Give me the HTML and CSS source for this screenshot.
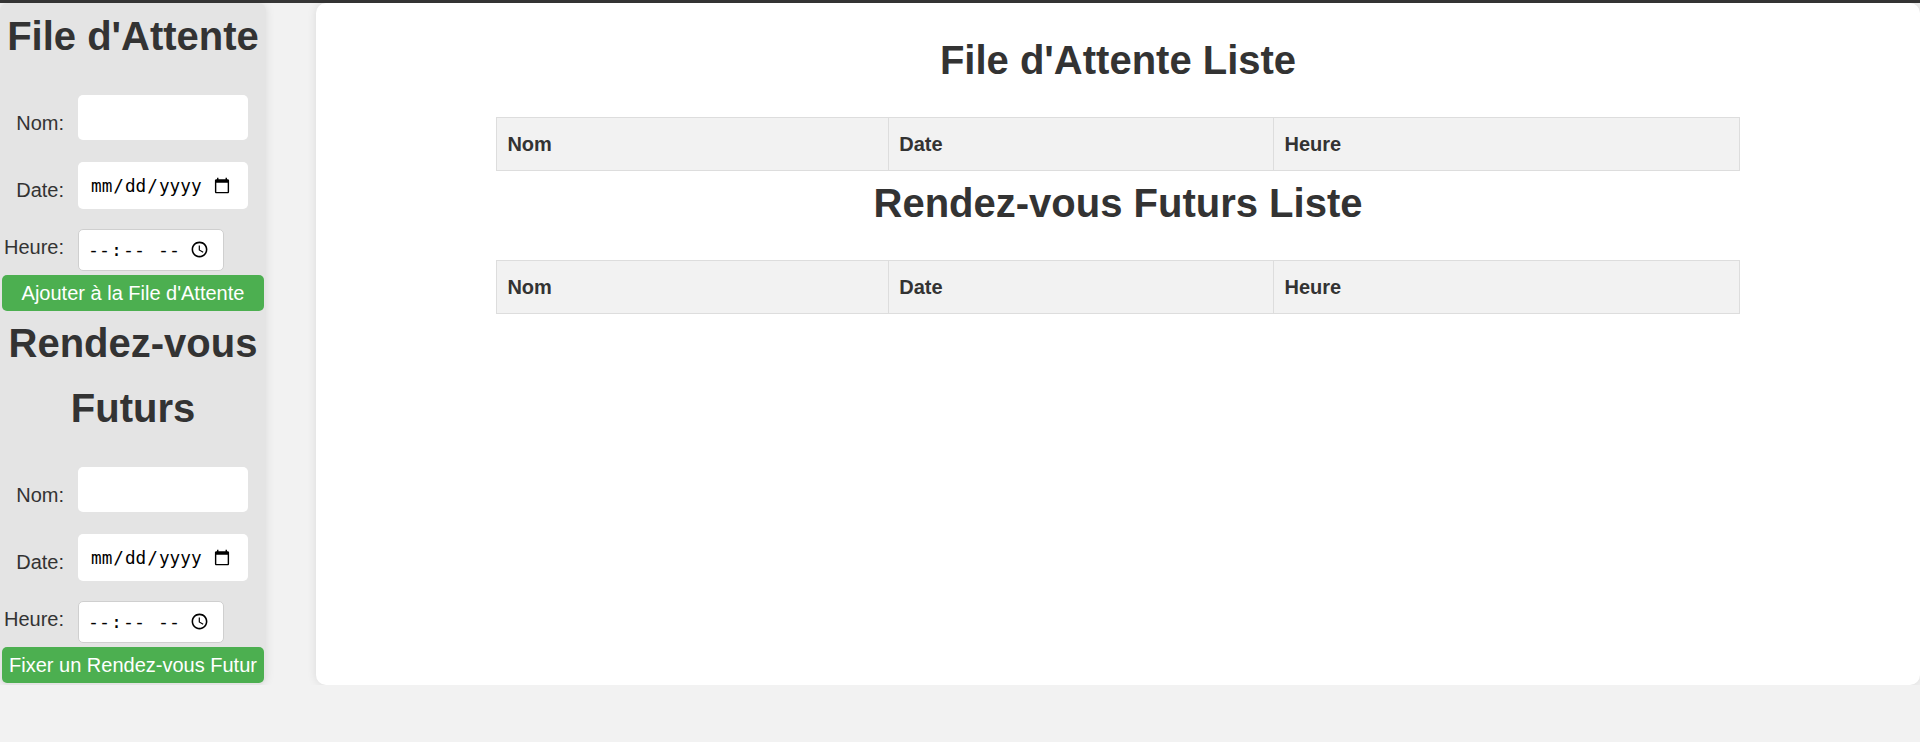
FILE: index.html
```html
<!DOCTYPE html>
<html lang="fr">
<head>
<meta charset="utf-8">
<title>File d'Attente</title>
<link rel="stylesheet" href="styles.css">
</head>
<body>
<div class="topbar"></div>
<div class="layout">
  <aside class="sidebar">
    <h1 class="side-title">File d'Attente</h1>
    <form class="entry-form">
      <div class="field field-text"><label for="n1">Nom:</label><input id="n1" class="in-text" type="text"></div>
      <div class="field field-date"><label for="d1">Date:</label><input id="d1" class="in-date" type="date"></div>
      <div class="field field-time"><label for="t1">Heure:</label><input id="t1" class="in-time" type="time"></div>
      <button type="button" class="btn">Ajouter à la File d'Attente</button>
    </form>
    <h1 class="side-title">Rendez-vous Futurs</h1>
    <form class="entry-form">
      <div class="field field-text"><label for="n2">Nom:</label><input id="n2" class="in-text" type="text"></div>
      <div class="field field-date"><label for="d2">Date:</label><input id="d2" class="in-date" type="date"></div>
      <div class="field field-time"><label for="t2">Heure:</label><input id="t2" class="in-time" type="time"></div>
      <button type="button" class="btn">Fixer un Rendez-vous Futur</button>
    </form>
  </aside>
  <main class="card">
    <h2 class="list-title">File d'Attente Liste</h2>
    <table class="list-table">
      <thead><tr><th>Nom</th><th>Date</th><th>Heure</th></tr></thead>
      <tbody></tbody>
    </table>
    <h2 class="list-title">Rendez-vous Futurs Liste</h2>
    <table class="list-table">
      <thead><tr><th>Nom</th><th>Date</th><th>Heure</th></tr></thead>
      <tbody></tbody>
    </table>
  </main>
</div>
</body>
</html>
```

FILE: styles.css
```css
* { box-sizing: border-box; }

html, body {
  margin: 0;
  padding: 0;
}

body {
  background: #f2f2f2;
  font-family: "Liberation Sans", Arial, sans-serif;
  font-size: 20px;
  line-height: 1.6;
  color: #333;
}

.topbar {
  height: 3px;
  background: #363636;
}

.layout {
  display: flex;
  align-items: stretch;
  gap: 50px;
}

.sidebar {
  flex: 0 0 266px;
  width: 266px;
  background: #e4e4e4;
  border-radius: 8px;
  padding: 1px 2px 2px;
  box-shadow: 0 0 10px rgba(0, 0, 0, 0.1);
}

.side-title {
  margin: 0 0 26px;
  font-size: 40px;
  line-height: 65px;
  font-weight: bold;
  text-align: center;
  color: #333;
}

.entry-form {
  display: flex;
  flex-direction: column;
}

.field {
  display: flex;
  align-items: center;
  gap: 14px;
}

.field label {
  flex: 0 0 62px;
  text-align: right;
  line-height: 32px;
  color: #333;
}

.field-text { margin-bottom: 22px; }
.field-text label { padding-top: 10px; }

.field-date { margin-bottom: 20px; }
.field-date label { padding-top: 8px; }

.field-time { margin-bottom: 4px; }
.field-time label { padding-bottom: 7px; }

.in-text,
.in-date,
.in-time {
  background: #fff;
  border-radius: 5px;
  color: #000;
  font-family: "DejaVu Sans Mono", "Liberation Mono", monospace;
  margin: 0;
  outline: none;
}

.in-text {
  width: 170px;
  height: 45px;
  border: none;
  padding: 0 10px;
  font-size: 19px;
}

.in-date {
  width: 170px;
  height: 47px;
  border: none;
  padding: 0 15px 0 12px;
  font-size: 17.7px;
}

.in-time {
  width: 146px;
  height: 42px;
  border: 1px solid #cfcfcf;
  padding: 0 11px 0 8px;
  font-size: 18.3px;
}

.btn {
  display: block;
  width: 100%;
  height: 36px;
  padding: 0;
  border: none;
  border-radius: 5px;
  background: #4caf50;
  color: #fff;
  font-family: "Liberation Sans", Arial, sans-serif;
  font-size: 20px;
  line-height: 36px;
  text-align: center;
  cursor: pointer;
}

.card {
  flex: 1 1 auto;
  background: #fff;
  border-radius: 10px;
  padding: 25px;
  box-shadow: 0 0 10px rgba(0, 0, 0, 0.1);
}

.list-title {
  margin: 0 0 25px;
  font-size: 40px;
  line-height: 64px;
  font-weight: bold;
  text-align: center;
  color: #333;
}

.list-table {
  width: 80%;
  margin: 0 auto;
  border-collapse: collapse;
}

.list-table th {
  border: 1px solid #ddd;
  background: #f2f2f2;
  padding: 10px;
  text-align: left;
  font-weight: bold;
  line-height: 32px;
  color: #333;
}
```
